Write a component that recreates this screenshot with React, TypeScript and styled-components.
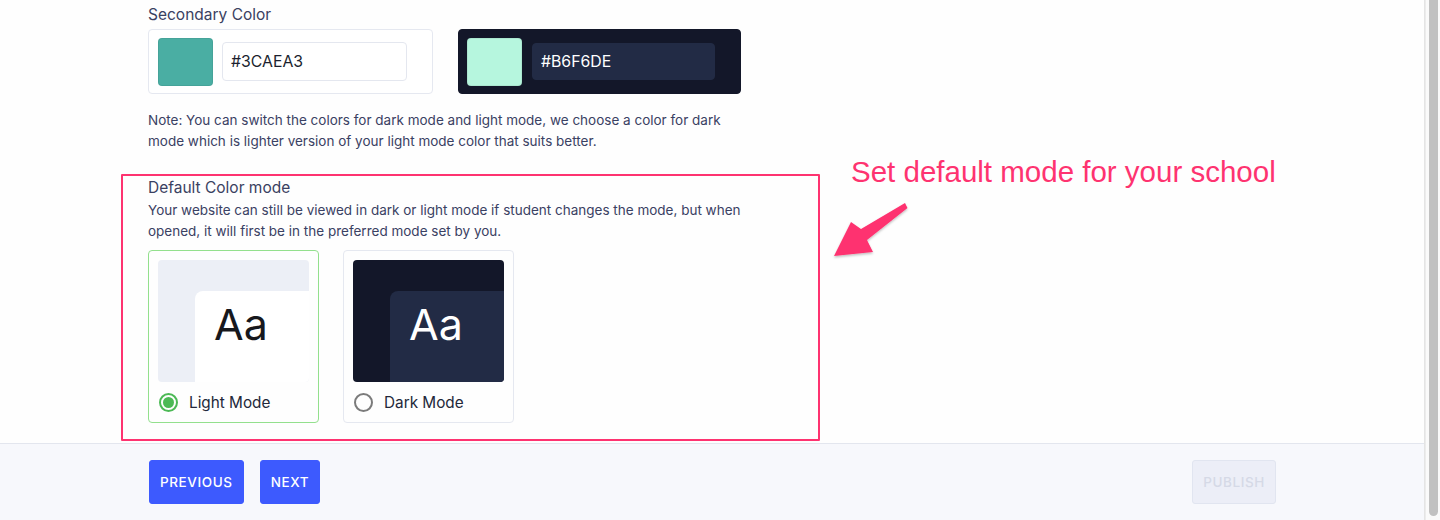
import React, { useState } from 'react'
import styled, { createGlobalStyle } from 'styled-components'

const GlobalStyle = createGlobalStyle`
  html, body {
    margin: 0;
    padding: 0;
    height: 520px;
    overflow: hidden;
  }
  body {
    font-family: Inter, 'Noto Sans', sans-serif;
    color: #3b4262;
  }
`

const Page = styled.div`
  display: flex;
  height: 520px;
  width: 1440px;
`

const Main = styled.div`
  display: flex;
  flex: 1;
  flex-direction: column;
  position: relative;
  background-color: #fefefe;
  border-right: 1px solid #e4e4e4;
`

const Content = styled.div`
  display: flex;
  flex: 1;
  flex-direction: column;
  padding: 5px 0 0 148px;
`

const Label = styled.div`
  font-size: 15.5px;
  line-height: 20px;
  color: #3a4161;
`

const ColorRow = styled.div`
  display: flex;
  gap: 25px;
  margin-top: 4px;
`

const ColorBox = styled.div<{ dark?: boolean }>`
  align-items: center;
  background-color: ${(p) => (p.dark ? '#131729' : '#fff')};
  border: 1px solid ${(p) => (p.dark ? '#131729' : '#e5e8f0')};
  border-radius: 4px;
  box-sizing: border-box;
  display: flex;
  gap: ${(p) => (p.dark ? '10px' : '9px')};
  height: 65px;
  padding: 0 25px 0 ${(p) => (p.dark ? '8px' : '9px')};
  width: ${(p) => (p.dark ? '283px' : '285px')};
`

const Swatch = styled.div<{ color: string }>`
  background-color: ${(p) => p.color};
  border: 1px solid rgba(0, 0, 0, 0.06);
  border-radius: 4px;
  box-sizing: border-box;
  height: 48px;
  width: 55px;
`

const HexInput = styled.div<{ dark?: boolean }>`
  align-items: center;
  background-color: ${(p) => (p.dark ? '#222b45' : '#fff')};
  border: 1px solid ${(p) => (p.dark ? '#222b45' : '#e4e7ef')};
  border-radius: 4px;
  box-sizing: border-box;
  color: ${(p) => (p.dark ? '#ffffff' : '#1b1f2e')};
  display: flex;
  flex: 1;
  font-size: 15.8px;
  height: ${(p) => (p.dark ? '37px' : '39px')};
  padding-left: 8px;
`

const Note = styled.p<{ gap: number }>`
  font-size: 13.5px;
  line-height: 21px;
  margin: ${(p) => p.gap}px 0 0;
  color: #3a4163;
  white-space: nowrap;
`

const ModeRow = styled.div`
  display: flex;
  gap: 24px;
  margin-top: 8px;
`

const ModeCard = styled.div<{ selected?: boolean }>`
  border: 1px solid ${(p) => (p.selected ? '#93e08d' : '#e5e8f0')};
  border-radius: 4px;
  box-sizing: border-box;
  display: flex;
  flex-direction: column;
  height: 173px;
  padding: 9px 9px 0;
  width: 171px;
`

const Preview = styled.div<{ dark?: boolean }>`
  background-color: ${(p) => (p.dark ? '#131729' : '#eceff6')};
  border-radius: 4px;
  display: flex;
  height: 122px;
  overflow: hidden;
  padding: 31px 0 0 37px;
  box-sizing: border-box;
`

const PreviewPanel = styled.div<{ dark?: boolean }>`
  background-color: ${(p) => (p.dark ? '#222b45' : '#ffffff')};
  border-top-left-radius: 8px;
  color: ${(p) => (p.dark ? '#ffffff' : '#17181d')};
  flex: 1;
  font-size: 43px;
  line-height: 1;
  padding: 12px 0 0 19px;
`

const RadioRow = styled.label`
  align-items: center;
  cursor: pointer;
  display: flex;
  font-size: 15.3px;
  gap: 11px;
  height: 20px;
  margin-top: 10px;
  padding-left: 1px;
  color: #23283a;
`

const Radio = styled.span<{ checked?: boolean }>`
  align-items: center;
  border: 2px solid ${(p) => (p.checked ? '#4cb955' : '#7b7b7b')};
  border-radius: 50%;
  box-sizing: border-box;
  display: flex;
  height: 19px;
  justify-content: center;
  width: 19px;

  &::after {
    background-color: #4cb955;
    border-radius: 50%;
    content: '';
    display: ${(p) => (p.checked ? 'block' : 'none')};
    height: 11px;
    width: 11px;
  }
`

const Footer = styled.div`
  align-items: flex-start;
  background-color: #f7f8fc;
  border-top: 1px solid #e3e6ee;
  display: flex;
  gap: 16px;
  height: 77px;
  box-sizing: border-box;
  padding: 16px 148px 0 149px;
`

const Button = styled.button<{ disabled?: boolean }>`
  background-color: ${(p) => (p.disabled ? '#eceef7' : '#3d5afe')};
  border: 1px solid ${(p) => (p.disabled ? '#e1e5f0' : '#3d5afe')};
  border-radius: 3px;
  color: ${(p) => (p.disabled ? '#d5d9e6' : '#ffffff')};
  font-family: Inter, 'Noto Sans', sans-serif;
  font-size: 13.5px;
  font-weight: 500;
  height: 44px;
  letter-spacing: 0.6px;
  padding: 0 10px;
  text-transform: uppercase;
  cursor: ${(p) => (p.disabled ? 'default' : 'pointer')};

  &:last-child {
    margin-left: auto;
  }
`

const Highlight = styled.div`
  border: 2px solid #fe3370;
  border-radius: 1px;
  height: 267px;
  left: 121px;
  pointer-events: none;
  position: absolute;
  top: 174px;
  width: 699px;
  box-sizing: border-box;
`

const Callout = styled.div`
  color: #fe3370;
  font-family: 'Liberation Sans', Arial, sans-serif;
  font-size: 29.5px;
  left: 851px;
  line-height: 1;
  position: absolute;
  top: 157px;
  white-space: nowrap;
`

const Arrow = styled.svg`
  left: 828px;
  position: absolute;
  top: 198px;
`

const ScrollTrack = styled.div`
  background-color: #fafafa;
  border-left: 1px solid #ececec;
  display: flex;
  justify-content: center;
  width: 14px;
`

const ScrollThumb = styled.div`
  background-color: #c1c1c1;
  border-radius: 0 0 5px 5px;
  height: 516px;
  width: 9px;
`

const modes = [
  { key: 'light', label: 'Light Mode', dark: false },
  { key: 'dark', label: 'Dark Mode', dark: true },
]

export default function App() {
  const [mode, setMode] = useState('light')

  return (
    <Page>
      <GlobalStyle />
      <Main>
        <Content>
          <Label>Secondary Color</Label>
          <ColorRow>
            <ColorBox>
              <Swatch color="#4aaea3" />
              <HexInput>#3CAEA3</HexInput>
            </ColorBox>
            <ColorBox dark>
              <Swatch color="#b6f6de" />
              <HexInput dark>#B6F6DE</HexInput>
            </ColorBox>
          </ColorRow>

          <Note gap={16}>
            Note: You can switch the colors for dark mode and light mode, we choose a color for dark
            <br />
            mode which is lighter version of your light mode color that suits better.
          </Note>

          <Label style={{ marginTop: 26 }}>Default Color mode</Label>
          <Note gap={2}>
            Your website can still be viewed in dark or light mode if student changes the mode, but when
            <br />
            opened, it will first be in the preferred mode set by you.
          </Note>

          <ModeRow>
            {modes.map((m) => (
              <ModeCard key={m.key} selected={mode === m.key} onClick={() => setMode(m.key)}>
                <Preview dark={m.dark}>
                  <PreviewPanel dark={m.dark}>Aa</PreviewPanel>
                </Preview>
                <RadioRow>
                  <Radio checked={mode === m.key} />
                  {m.label}
                </RadioRow>
              </ModeCard>
            ))}
          </ModeRow>
        </Content>

        <Footer>
          <Button>Previous</Button>
          <Button>Next</Button>
          <Button disabled>Publish</Button>
        </Footer>

        <Highlight />
        <Callout>Set default mode for your school</Callout>
        <Arrow width="90" height="70" viewBox="828 198 90 70">
          <defs>
            <filter id="arrowShadow" x="-20%" y="-20%" width="140%" height="140%">
              <feDropShadow dx="0" dy="1.5" stdDeviation="1.2" floodColor="#000" floodOpacity="0.25" />
            </filter>
          </defs>
          <polygon
            points="905,203 907.5,208 867,240 873,252 834,256 851,222 861,229"
            fill="#fe3370"
            filter="url(#arrowShadow)"
            strokeLinejoin="round"
          />
        </Arrow>
      </Main>
      <ScrollTrack>
        <ScrollThumb />
      </ScrollTrack>
    </Page>
  )
}
